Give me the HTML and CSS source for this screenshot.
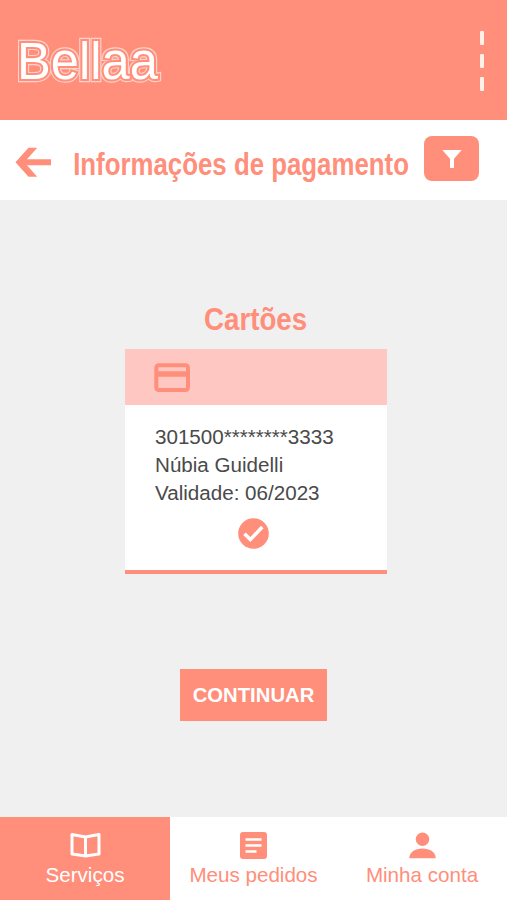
FILE: index.html
```html
<!DOCTYPE html>
<html lang="pt-BR">
<head>
    <meta charset="UTF-8">
    <meta name="viewport" content="width=device-width, initial-scale=1.0">
    <title>Bellaa - Informações de pagamento</title>
    <link rel="stylesheet" href="styles.css">
</head>
<body>
    <header class="topbar">
        <svg class="logo" width="170" height="76" viewBox="0 0 170 76" role="img" aria-label="Bellaa">
            <g class="logo-text">
                <text class="logo-outline" x="10" y="56" textLength="141" lengthAdjust="spacingAndGlyphs">Bellaa</text>
                <text class="logo-gap" x="10" y="56" textLength="141" lengthAdjust="spacingAndGlyphs">Bellaa</text>
                <text class="logo-fill" x="10" y="56" textLength="141" lengthAdjust="spacingAndGlyphs">Bellaa</text>
            </g>
        </svg>
        <div class="menu">
            <span></span>
            <span></span>
            <span></span>
        </div>
    </header>

    <div class="titlebar">
        <svg class="back" width="36" height="31" viewBox="0 0 36 31">
            <path d="M.500 15.300 13.500.800h8.700L12 12.300h24v6H12l10.200 11.500h-8.700z"/>
        </svg>
        <h1><span>Informações de pagamento</span></h1>
        <button class="filter" aria-label="Filtrar">
            <svg width="20" height="18" viewBox="0 0 20 18">
                <path d="M.300 0h19.400L12 8.800V18H8V8.800z"/>
            </svg>
        </button>
    </div>

    <main>
        <h2><span>Cartões</span></h2>
        <div class="card">
            <div class="card-header">
                <svg width="36" height="29" viewBox="0 0 36 29">
                    <rect x="2.300" y="2.300" width="31.700" height="24.700" rx="2.500"/>
                    <path d="M2 11h32"/>
                </svg>
            </div>
            <div class="card-body">
                <p>301500********3333</p>
                <p>Núbia Guidelli</p>
                <p>Validade: 06/2023</p>
            </div>
            <svg class="check" width="31" height="31" viewBox="0 0 31 31">
                <circle cx="15.500" cy="15.500" r="15.300"/>
                <path d="M6.500 15.800l5.800 5.800L24.300 9"/>
            </svg>
        </div>
        <button class="continue">CONTINUAR</button>
    </main>

    <nav>
        <a class="tab active">
            <svg width="31" height="27" viewBox="0 0 31 27">
                <path class="book" d="M2 2.500 15.500 5 29 2.500v19.500L15.500 24 2 22zM15.500 5v19"/>
            </svg>
            <span>Serviços</span>
        </a>
        <a class="tab">
            <svg width="27" height="27" viewBox="0 0 27 27">
                <rect width="27" height="27" rx="3"/>
                <path class="lines" d="M5.500 7.500h16M5.500 13.500h16M5.500 19.500h11"/>
            </svg>
            <span>Meus pedidos</span>
        </a>
        <a class="tab">
            <svg width="27" height="27" viewBox="0 0 27 27">
                <circle cx="13.500" cy="7.300" r="6.700"/>
                <path d="M.300 26.300C.300 20 6 16.500 13.500 16.500S26.700 20 26.700 26.300z"/>
            </svg>
            <span>Minha conta</span>
        </a>
    </nav>
</body>
</html>
```

FILE: styles.css
```css
* {
    box-sizing: border-box;
}
body {
    margin: 0;
    height: 900px;
    display: flex;
    flex-direction: column;
    background-color: #f0f0f0;
    font-family: "Liberation Sans", Arial, sans-serif;
}
svg {
    display: block;
}
h1, h2, p {
    margin: 0;
}
/* condensed headings */
h1, h2 {
    height: 40px;
    display: flex;
    justify-content: center;
    font-size: 32px;
    line-height: 40px;
    white-space: nowrap;
    color: #ff8e7a;
}
h1 span {
    transform: scaleX(0.807);
}
h2 span {
    transform: scaleX(0.865);
}
button {
    border: none;
    padding: 0;
    font-family: inherit;
    background-color: #ff8e7a;
    color: white;
}

.topbar {
    height: 120px;
    padding: 23px 23px 0 7px;
    display: flex;
    justify-content: space-between;
    background-color: #ff8e7a;
}
.logo-text {
    font-size: 51px;
    stroke-linejoin: miter;
}
.logo-outline {
    fill: none;
    stroke: #ffd3cb;
    stroke-width: 6.4px;
}
.logo-gap {
    fill: none;
    stroke: #ff8e7a;
    stroke-width: 4.2px;
}
.logo-fill {
    fill: white;
}
.menu {
    margin-top: 8px;
    display: flex;
    flex-direction: column;
    gap: 9px;
}
.menu span {
    width: 4px;
    height: 14px;
    border-radius: 1px;
    background-color: #fff1ea;
}

.titlebar {
    height: 80px;
    padding-left: 15px;
    display: flex;
    align-items: flex-start;
    background-color: white;
}
.back {
    flex-shrink: 0;
    margin-top: 27px;
    fill: #ff8e7a;
}
h1 {
    width: 336px;
    flex-shrink: 0;
    margin: 24px 0 0 22px;
}
.filter {
    flex-shrink: 0;
    width: 55px;
    height: 45px;
    margin: 16px 0 0 15px;
    border-radius: 8px;
    display: flex;
    justify-content: center;
    align-items: center;
}
.filter svg {
    fill: white;
}

main {
    flex: 1;
    display: flex;
    flex-direction: column;
    align-items: center;
}
h2 {
    margin-top: 99px;
    margin-left: 5px;
}
.card {
    width: 262px;
    height: 225px;
    margin-top: 10px;
    margin-left: 5px;
    background-color: white;
    border-bottom: 4px solid #ff8e7a;
}
.card-header {
    height: 56px;
    padding: 14px 29px;
    background-color: #ffc7c1;
}
.card-header svg {
    fill: none;
    stroke: #ff8e7a;
    stroke-width: 4;
}
.card-header path {
    stroke-width: 5.5;
}
.card-body {
    padding: 18px 0 0 29.5px;
    font-size: 20px;
    line-height: 28px;
    color: #4a4a4a;
}
.card-body p {
    transform: scaleX(1.03);
    transform-origin: left;
}
.check {
    margin: 11px 0 0 113px;
    fill: #ff8e7a;
}
.check path {
    fill: none;
    stroke: white;
    stroke-width: 3.5;
}
.continue {
    width: 147px;
    height: 52px;
    margin-top: 95px;
    font-size: 20.3px;
    font-weight: bold;
}

nav {
    height: 83px;
    display: grid;
    grid-template-columns: 170px 167px 170px;
    background-color: white;
}
.tab {
    padding-top: 15px;
    display: flex;
    flex-direction: column;
    align-items: center;
    gap: 4px;
    font-size: 20.6px;
    line-height: 24px;
    color: #ff8e7a;
    fill: #ff8e7a;
}
.tab.active {
    background-color: #ff8e7a;
    color: white;
}
.book {
    fill: none;
    stroke: white;
    stroke-width: 3;
    stroke-linejoin: round;
}
.lines {
    stroke: white;
    stroke-width: 2.6;
}
```
